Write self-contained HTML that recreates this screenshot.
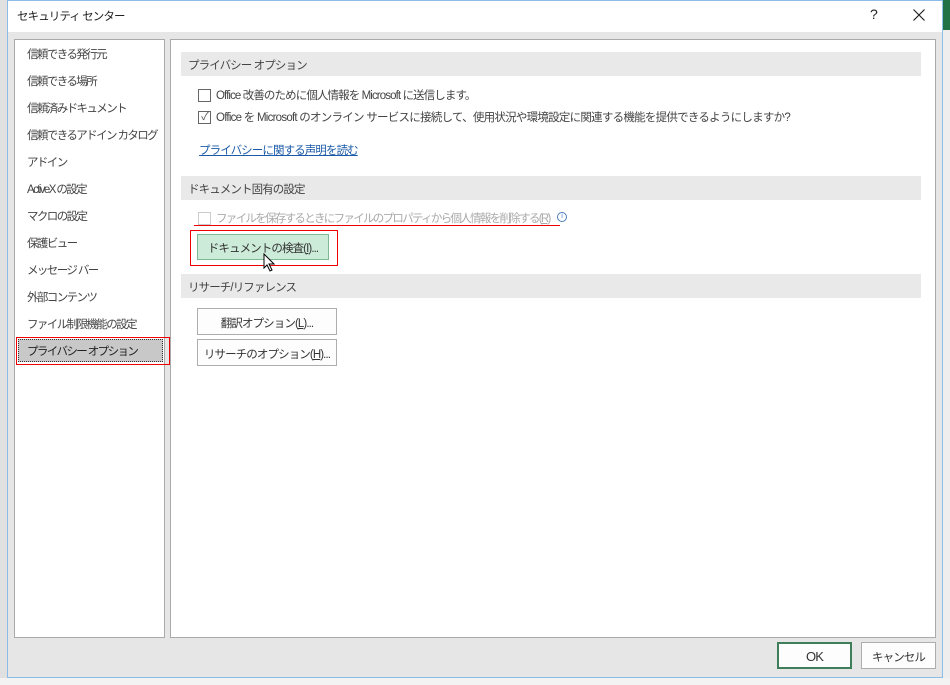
<!DOCTYPE html>
<html><head><meta charset="utf-8"><style>
*{margin:0;padding:0;box-sizing:border-box}
body{width:950px;height:685px;position:relative;overflow:hidden;background:#fff;font-family:"Liberation Sans","Noto Sans CJK JP",sans-serif;font-size:11.5px;letter-spacing:-0.9px;color:#444}
.a{position:absolute;white-space:nowrap}
.dlg{left:7px;top:0;width:936px;height:678px;background:#e6e6e6;border:1px solid #8cbce8}
.hdr{background:#e9e9e9;height:24px;left:181px;width:740px;color:#444;padding:5px 0 0 7px}
.li{left:27px;color:#444;letter-spacing:-1.6px}
.btn{background:#fdfdfd;border:1px solid #adadad;color:#333;text-align:center}
.cb{width:13px;height:13px;border:1px solid #666;background:#fff}
</style></head><body>
<div class="a" style="left:0;top:0;width:7px;height:685px;background:#e0e0e0"></div>
<div class="a" style="left:943px;top:0;width:7px;height:685px;background:#eee"></div>
<div class="a" style="left:943px;top:0;width:7px;height:30px;background:#217346"></div>
<div class="a" style="left:0;top:678px;width:950px;height:7px;background:#f3f3f3"></div>
<div class="a dlg"></div>
<div class="a" style="left:8px;top:1px;width:934px;height:31px;background:#fff"></div>
<div class="a" style="left:17px;top:8px;color:#222">セキュリティ センター</div>
<div class="a" style="left:870px;top:6px;font-size:14px;color:#222">?</div>
<svg class="a" style="left:913px;top:9px" width="12" height="12"><path d="M0.5 0.5L11.5 11.5M11.5 0.5L0.5 11.5" stroke="#222" stroke-width="1.2"/></svg>
<div class="a" style="left:14px;top:39px;width:151px;height:599px;background:#fff;border:1px solid #aaa"></div>
<div class="a" style="left:170px;top:39px;width:766px;height:599px;background:#fff;border:1px solid #aaa"></div>
<div class="a li" style="top:46px">信頼できる発行元</div>
<div class="a li" style="top:73px">信頼できる場所</div>
<div class="a li" style="top:100px">信頼済みドキュメント</div>
<div class="a li" style="top:127px">信頼できるアドイン カタログ</div>
<div class="a li" style="top:154px">アドイン</div>
<div class="a li" style="top:181px">ActiveX の設定</div>
<div class="a li" style="top:208px">マクロの設定</div>
<div class="a li" style="top:235px">保護ビュー</div>
<div class="a li" style="top:262px">メッセージ バー</div>
<div class="a li" style="top:289px">外部コンテンツ</div>
<div class="a li" style="top:316px">ファイル制限機能の設定</div>
<div class="a" style="left:16px;top:337px;width:154px;height:28px;border:1px solid #e00"></div>
<div class="a" style="left:18px;top:339px;width:145px;height:23px;background:#c8c8c8;border:1px dotted #333"></div>
<div class="a li" style="top:343px;color:#222">プライバシー オプション</div>
<div class="a hdr" style="top:52px">プライバシー オプション</div>
<div class="a cb" style="left:198px;top:89px"></div>
<div class="a" style="left:216px;top:87px">Office 改善のために個人情報を Microsoft に送信します。</div>
<div class="a cb" style="left:198px;top:111px;font-size:11px;line-height:11px;text-align:center;color:#555">✓</div>
<div class="a" style="left:216px;top:109px;letter-spacing:-0.75px">Office を Microsoft のオンライン サービスに接続して、使用状況や環境設定に関連する機能を提供できるようにしますか?</div>
<div class="a" style="left:199px;top:142px;color:#1a5aa8;text-decoration:underline">プライバシーに関する声明を読む</div>
<div class="a hdr" style="top:176px">ドキュメント固有の設定</div>
<div class="a cb" style="left:198px;top:212px;border-color:#ccc"></div>
<div class="a" style="left:216px;top:210px;color:#aaa;letter-spacing:-1.7px">ファイルを保存するときにファイルのプロパティから個人情報を削除する(<u>R</u>)</div>
<div class="a" style="left:557px;top:212px;width:10px;height:10px;border:1px solid #4a7ec0;border-radius:50%;font-size:7px;line-height:8px;text-align:center;color:#4a7ec0;letter-spacing:0">i</div>
<div class="a" style="left:194px;top:225px;width:366px;height:1px;background:#e00"></div>
<div class="a" style="left:190px;top:230px;width:148px;height:36px;border:1px solid #e00"></div>
<div class="a btn" style="left:197px;top:234px;width:132px;height:26px;background:#cdebd9;border-color:#7fb894;padding-top:5px">ドキュメントの検査(<u>I</u>)...</div>
<svg class="a" style="left:263px;top:253px" width="14" height="20"><path d="M1 1 L1 15 L4 12 L7 18 L9 17 L6 11 L11 11 Z" fill="#fff" stroke="#000" stroke-width="1"/></svg>
<div class="a hdr" style="top:274px">リサーチ/リファレンス</div>
<div class="a btn" style="left:197px;top:308px;width:140px;height:27px;padding-top:6px">翻訳オプション(<u>L</u>)...</div>
<div class="a btn" style="left:197px;top:339px;width:140px;height:27px;padding-top:6px">リサーチのオプション(<u>H</u>)...</div>
<div class="a btn" style="left:777px;top:642px;width:75px;height:27px;border:2px solid #3f7e5a;padding-top:5px;font-size:13px">OK</div>
<div class="a btn" style="left:861px;top:642px;width:75px;height:27px;padding-top:6px">キャンセル</div>
</body></html>
